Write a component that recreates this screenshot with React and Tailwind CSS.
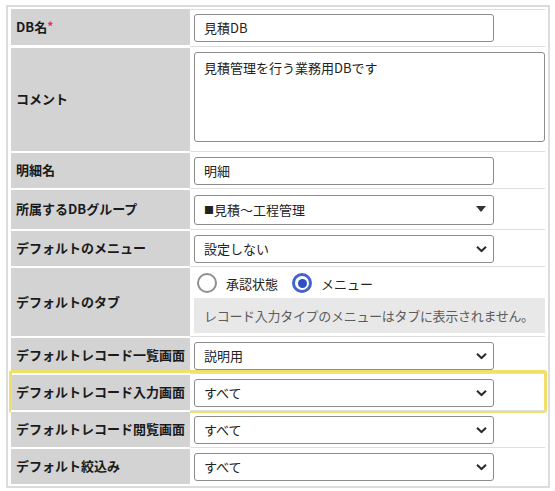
import React from 'react'

const font = { fontFamily: '"Noto Sans CJK JP", "Noto Sans", sans-serif' }

function Chevron(){
  return (
    <svg width="11" height="7" viewBox="0 0 11 7" className="absolute right-[6px] top-1/2 -translate-y-1/2">
      <path d="M1 1.2 L5.5 5.5 L10 1.2" fill="none" stroke="#2b2b2b" strokeWidth="2" />
    </svg>
  )
}

function Select({ value, caret }){
  return (
    <div className={`relative w-[300px] ${caret ? 'h-[30px]' : 'h-[28px]'} border border-[#8c8c8c] rounded-[3px] bg-white flex items-center pl-[9px] text-[13px] text-[#222]`}>
      {value}
      {caret ? (
        <svg width="10" height="6" viewBox="0 0 10 6" className="absolute right-[7px] top-[10px]">
          <path d="M0 0 H10 L5 6 Z" fill="#333" />
        </svg>
      ) : <Chevron />}
    </div>
  )
}

function Row({ label, children, h, first, valueClass = 'items-center', highlight }){
  const sepL = first ? '' : 'border-t-2 border-white'
  const sepV = first ? 'border-t border-[#dedede]' : 'border-t border-[#dedede] pt-px'
  return (
    <div className="relative flex">
      <div className={`w-[179px] shrink-0 ${sepL}`}>
        <div className={`${h} bg-[#d3d3d3] flex items-center pl-[5px] pb-[2px] text-[13px] font-bold text-[#1a1a1a] leading-none`}>
          {label}
        </div>
      </div>
      <div className={`flex-1 ${sepV}`}>
        <div className={`${h} flex ${valueClass} pl-[4px]`}>{children}</div>
      </div>
      {highlight && (
        <div className="absolute -left-[2px] -right-[2px] -top-[3px] -bottom-[3px] border-[3px] border-[#f1df6c] rounded-[3px] pointer-events-none" />
      )}
    </div>
  )
}

function Radio({ checked, label }){
  return (
    <label className="flex items-center gap-[9px]">
      {checked ? (
        <span className="w-[20px] h-[20px] rounded-full border-[3px] border-[#4463cf] flex items-center justify-center bg-white">
          <span className="w-[9px] h-[9px] rounded-full bg-[#2d4fc6]" />
        </span>
      ) : (
        <span className="w-[20px] h-[20px] rounded-full border-[2px] border-[#8f8f8f] bg-white" />
      )}
      <span className="text-[13px] text-[#222] leading-none">{label}</span>
    </label>
  )
}

export default function App(){
  return (
    <div className="pl-[6px] pt-[5px] bg-white min-h-screen" style={font}>
      <div className="w-[544px] border-2 border-[#dcdcdc] px-[3px] pt-[2px] pb-[2px]">
        <Row first h="h-[36px]" label={<span>DB名<span className="text-[#e0305a] text-[12px] align-top">*</span></span>}>
          <div className="w-[300px] h-[28px] border border-[#8c8c8c] rounded-[3px] flex items-center pl-[9px] text-[13px] text-[#222]">見積DB</div>
        </Row>
        <Row h="h-[103px]" label="コメント" valueClass="items-start pt-[4px]">
          <div className="w-full h-[90px] border border-[#8c8c8c] rounded-[3px] pl-[9px] pt-[5px] text-[13px] text-[#222] leading-[20px]">見積管理を行う業務用DBです</div>
        </Row>
        <Row h="h-[35px]" label="明細名">
          <div className="w-[300px] h-[28px] border border-[#8c8c8c] rounded-[3px] flex items-center pl-[9px] text-[13px] text-[#222]">明細</div>
        </Row>
        <Row h="h-[39px]" label="所属するDBグループ">
          <Select caret value={<span><span className="text-[10px] relative -top-px">■</span>見積～工程管理</span>} />
        </Row>
        <Row h="h-[35px]" label="デフォルトのメニュー">
          <Select value="設定しない" />
        </Row>
        <Row h="h-[68px]" label="デフォルトのタブ" valueClass="flex-col pt-[5px]">
          <div className="flex items-center gap-[14px] h-[20px] pl-[3px]">
            <Radio label="承認状態" />
            <Radio checked label="メニュー" />
          </div>
          <div className="mt-[5px] h-[35px] bg-[#e8e8e8] flex items-center pl-[10px] text-[13px] text-[#5c5c5c] tracking-[-0.3px]">
            レコード入力タイプのメニューはタブに表示されません。
          </div>
        </Row>
        <Row h="h-[35px]" label="デフォルトレコード一覧画面">
          <Select value="説明用" />
        </Row>
        <Row h="h-[35px]" label="デフォルトレコード入力画面" highlight>
          <Select value="すべて" />
        </Row>
        <Row h="h-[35px]" label="デフォルトレコード閲覧画面">
          <Select value="すべて" />
        </Row>
        <Row h="h-[35px]" label="デフォルト絞込み">
          <Select value="すべて" />
        </Row>
      </div>
    </div>
  )
}
